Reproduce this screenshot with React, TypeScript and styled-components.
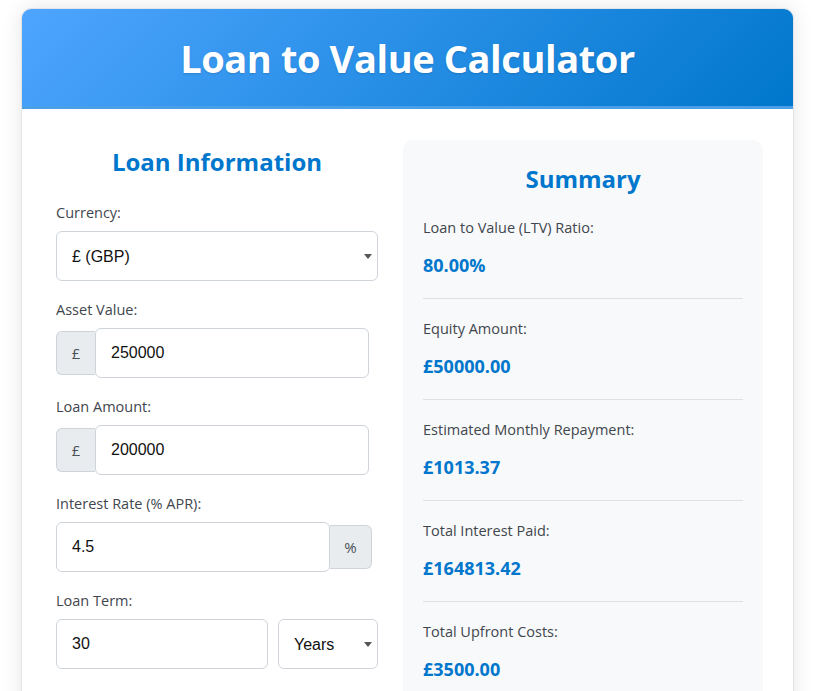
import React from "react";
import styled, { createGlobalStyle } from "styled-components";

const GlobalStyle = createGlobalStyle`
  html, body {
    margin: 0;
    padding: 0;
    background: #ffffff;
    font-family: "Open Sans", "Noto Sans", sans-serif;
  }
  * {
    box-sizing: border-box;
  }
`;

const summary = [
  { label: "Loan to Value (LTV) Ratio:", value: "80.00%" },
  { label: "Equity Amount:", value: "£50000.00" },
  { label: "Estimated Monthly Repayment:", value: "£1013.37" },
  { label: "Total Interest Paid:", value: "£164813.42" },
  { label: "Total Upfront Costs:", value: "£3500.00" },
];

const App: React.FunctionComponent<{}> = () => {
  return (
    <>
      <GlobalStyle />
      <PageStyled>
        <CardStyled>
          <HeaderStyled>
            <h1>Loan to Value Calculator</h1>
          </HeaderStyled>

          <ContentStyled>
            <FormColumn>
              <SectionTitle>Loan Information</SectionTitle>

              <FieldGroup>
                <Label>Currency:</Label>
                <SelectWrap>
                  <Select defaultValue="GBP">
                    <option value="GBP">£ (GBP)</option>
                    <option value="USD">$ (USD)</option>
                    <option value="EUR">€ (EUR)</option>
                  </Select>
                </SelectWrap>
              </FieldGroup>

              <FieldGroup>
                <Label>Asset Value:</Label>
                <InputRow>
                  <Addon side="left">£</Addon>
                  <Input defaultValue="250000" />
                  <RowSpacer />
                </InputRow>
              </FieldGroup>

              <FieldGroup>
                <Label>Loan Amount:</Label>
                <InputRow>
                  <Addon side="left">£</Addon>
                  <Input defaultValue="200000" />
                  <RowSpacer />
                </InputRow>
              </FieldGroup>

              <FieldGroup>
                <Label>Interest Rate (% APR):</Label>
                <InputRow>
                  <Input defaultValue="4.5" />
                  <Addon side="right">%</Addon>
                  <RowSpacer small />
                </InputRow>
              </FieldGroup>

              <FieldGroup>
                <Label>Loan Term:</Label>
                <TermRow>
                  <Input defaultValue="30" />
                  <SelectWrap narrow>
                    <Select defaultValue="years">
                      <option value="years">Years</option>
                      <option value="months">Months</option>
                    </Select>
                  </SelectWrap>
                </TermRow>
              </FieldGroup>
            </FormColumn>

            <SummaryPanel>
              <SummaryTitle>Summary</SummaryTitle>
              {summary.map(item => (
                <SummaryItem key={item.label}>
                  <SummaryLabel>{item.label}</SummaryLabel>
                  <SummaryValue>{item.value}</SummaryValue>
                </SummaryItem>
              ))}
            </SummaryPanel>
          </ContentStyled>
        </CardStyled>
      </PageStyled>
    </>
  );
};

const PageStyled = styled.div`
  padding: 8px 19px 40px 21px;
`;

const CardStyled = styled.div`
  background: #ffffff;
  border: 1px solid #e4e4e4;
  border-radius: 10px;
  box-shadow: 0 0 20px rgba(0, 0, 0, 0.1);
  overflow: hidden;
`;

const HeaderStyled = styled.div`
  background: linear-gradient(135deg, #4ea5ff 0%, #0077cc 100%);
  border-bottom: 3px solid #4b9fe6;
  height: 100px;
  display: flex;
  align-items: center;
  justify-content: center;

  h1 {
    margin: 0;
    color: #ffffff;
    font-size: 38px;
    font-weight: 700;
    letter-spacing: -0.4px;
    line-height: 1;
    text-shadow: 0 1px 2px rgba(0, 0, 0, 0.15);
  }
`;

const ContentStyled = styled.div`
  display: grid;
  grid-template-columns: 322px 1fr;
  column-gap: 25px;
  padding: 30px 30px 0 34px;
  align-items: start;
`;

const FormColumn = styled.div`
  display: flex;
  flex-direction: column;
`;

const SectionTitle = styled.h2`
  margin: 6px 0 23px;
  color: #0077cc;
  font-size: 24px;
  font-weight: 700;
  line-height: 34px;
  text-align: center;
`;

const FieldGroup = styled.div`
  display: flex;
  flex-direction: column;
  margin-bottom: 18px;
`;

const Label = styled.label`
  color: #3f464d;
  font-size: 14.5px;
  line-height: 22px;
  margin-bottom: 7px;
`;

const SelectWrap = styled.div<{ narrow?: boolean }>`
  position: relative;
  flex: ${p => (p.narrow ? "0 0 100px" : "1")};

  &::after {
    content: "";
    position: absolute;
    right: 6px;
    top: 50%;
    margin-top: -2px;
    border-left: 4px solid transparent;
    border-right: 4px solid transparent;
    border-top: 5px solid #555;
    pointer-events: none;
  }
`;

const Select = styled.select`
  width: 100%;
  height: 50px;
  padding: 0 15px;
  appearance: none;
  background: #ffffff;
  border: 1px solid #ced4da;
  border-radius: 6px;
  color: #111;
  font-family: "Liberation Sans", Arial, sans-serif;
  font-size: 16px;
`;

const InputRow = styled.div`
  display: flex;
  align-items: center;
`;

const TermRow = styled.div`
  display: flex;
  gap: 10px;
`;

const RowSpacer = styled.div<{ small?: boolean }>`
  flex: 0 0 ${p => (p.small ? "6px" : "9px")};
`;

const Input = styled.input`
  flex: 1;
  min-width: 0;
  height: 50px;
  padding: 0 15px;
  background: #ffffff;
  border: 1px solid #ced4da;
  border-radius: 6px;
  color: #111;
  font-family: "Liberation Sans", Arial, sans-serif;
  font-size: 16px;
`;

const Addon = styled.span<{ side: "left" | "right" }>`
  flex: 0 0 ${p => (p.side === "left" ? "39px" : "42px")};
  height: 44px;
  display: flex;
  align-items: center;
  justify-content: center;
  background: #e9ecef;
  border: 1px solid #ced4da;
  color: #495057;
  font-size: 15px;
  border-radius: ${p => (p.side === "left" ? "6px 0 0 6px" : "0 6px 6px 0")};
  ${p => (p.side === "left" ? "border-right: none;" : "border-left: none;")}
`;

const SummaryPanel = styled.div`
  background: #f8f9fa;
  border-radius: 10px;
  padding: 22px 20px 20px;
  margin-top: 1px;
`;

const SummaryTitle = styled.h2`
  margin: 0 0 2px;
  color: #0077cc;
  font-size: 24px;
  font-weight: 700;
  line-height: 34px;
  text-align: center;
`;

const SummaryItem = styled.div`
  padding: 19px 0;
  border-bottom: 1px solid #dee2e6;

  &:last-child {
    border-bottom: none;
  }
`;

const SummaryLabel = styled.p`
  margin: 0 0 13px;
  color: #3f464d;
  font-size: 14.5px;
  line-height: 22px;
`;

const SummaryValue = styled.p`
  margin: 0;
  color: #0077cc;
  font-size: 18px;
  font-weight: 700;
  line-height: 27px;
`;

export default App;
